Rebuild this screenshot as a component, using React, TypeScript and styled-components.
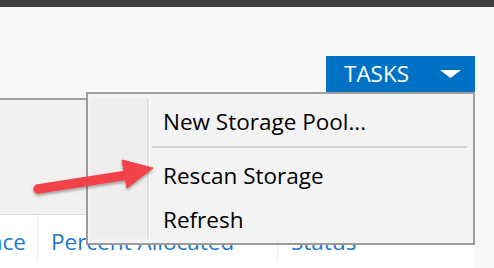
import React from "react";
import styled, { createGlobalStyle } from "styled-components";

const Global = createGlobalStyle`
  html, body { margin: 0; padding: 0; background: #f7f7f7; }
  body { font-family: "Open Sans", "Noto Sans", sans-serif; overflow: hidden; }
  * { box-sizing: border-box; }
`;

const Page = styled.div`
  position: relative;
  width: 494px;
  height: 268px;
  overflow: hidden;
  background: #f7f7f7;
`;

const TopBar = styled.div`
  height: 7px;
  background: #404040;
`;

const Toolbar = styled.div`
  display: flex;
  justify-content: flex-end;
  margin-top: 49px;
  padding-right: 19px;
`;

const TasksButton = styled.div`
  width: 149px;
  height: 36px;
  background: #0072c6;
  color: #ffffff;
  display: flex;
  align-items: center;
  justify-content: space-between;
  padding: 0 14px 0 18px;
  font-size: 22.5px;
  line-height: 1;
`;

const Panel = styled.div`
  margin-top: 6px;
  width: 474px;
  border-top: 2px solid #a0a0a0;
`;

const PanelBody = styled.div`
  height: 114px;
  background: #f0f0f0;
`;

const HeaderRow = styled.div`
  display: flex;
  height: 60px;
  background: #ffffff;
  border-top: 1px solid #dcdcdc;
`;

const HeaderCell = styled.div<{ $w: number; $first?: boolean }>`
  width: ${(p) => p.$w}px;
  flex: none;
  display: flex;
  justify-content: ${(p) => (p.$first ? "flex-end" : "flex-start")};
  padding: 12px ${(p) => (p.$first ? "11px" : "0")} 0 ${(p) => (p.$first ? "0" : "13px")};
  border-left: ${(p) => (p.$first ? "none" : "1px solid #ececec")};
  height: 46px;
  overflow: hidden;
  white-space: nowrap;
  color: #1c78c8;
  font-size: 22.5px;
  line-height: 30px;
`;

const Menu = styled.div`
  position: absolute;
  left: 86px;
  top: 92px;
  width: 389px;
  height: 153px;
  border: 2px solid #9c9c9c;
  background: #f3f3f3;
  padding: 4px 4px 4px 3px;
  display: flex;
`;

const IconColumn = styled.div`
  width: 58px;
  flex: none;
  background: #eeeeee;
  border-right: 2px solid #e0e0e0;
  box-shadow: 1px 0 0 #ffffff;
`;

const Items = styled.div`
  flex: 1;
  margin-left: 1px;
  padding-left: 13px;
  display: flex;
  flex-direction: column;
  color: #000000;
  font-size: 22.5px;
`;

const Item = styled.div<{ $h: number }>`
  height: ${(p) => p.$h}px;
  line-height: ${(p) => p.$h}px;
  white-space: nowrap;
  flex: none;
`;

const Separator = styled.div`
  height: 2px;
  flex: none;
  background: #d6d6d6;
  margin: 1px 2px 6px -11px;
`;

const ArrowSvg = styled.svg`
  position: absolute;
  left: 30px;
  top: 152px;
  width: 130px;
  height: 45px;
  overflow: visible;
  pointer-events: none;
`;

export default function App() {
  return (
    <Page>
      <Global />
      <TopBar />
      <Toolbar>
        <TasksButton>
          <span>TASKS</span>
          <svg width="21" height="8" viewBox="0 0 21 8">
            <polygon points="0,0 21,0 10.5,8" fill="#ffffff" />
          </svg>
        </TasksButton>
      </Toolbar>
      <Panel>
        <PanelBody />
        <HeaderRow>
          <HeaderCell $w={37} $first>
            Free Space
          </HeaderCell>
          <HeaderCell $w={240}>Percent Allocated</HeaderCell>
          <HeaderCell $w={197}>Status</HeaderCell>
        </HeaderRow>
      </Panel>
      <Menu>
        <IconColumn />
        <Items>
          <Item $h={47}>New Storage Pool...</Item>
          <Separator />
          <Item $h={44}>Rescan Storage</Item>
          <Item $h={44}>Refresh</Item>
        </Items>
      </Menu>
      <ArrowSvg viewBox="0 0 130 45">
        <defs>
          <filter id="sh" x="-20%" y="-40%" width="140%" height="180%">
            <feDropShadow dx="0" dy="2" stdDeviation="1.5" floodColor="#000" floodOpacity="0.35" />
          </filter>
        </defs>
        <g filter="url(#sh)" fill="#f2434a" stroke="#f2434a">
          <line x1="8" y1="37" x2="98" y2="23" strokeWidth="9.5" strokeLinecap="round" />
          <polygon points="92,8 123,16 97,36" strokeWidth="1" strokeLinejoin="round" />
        </g>
      </ArrowSvg>
    </Page>
  );
}
